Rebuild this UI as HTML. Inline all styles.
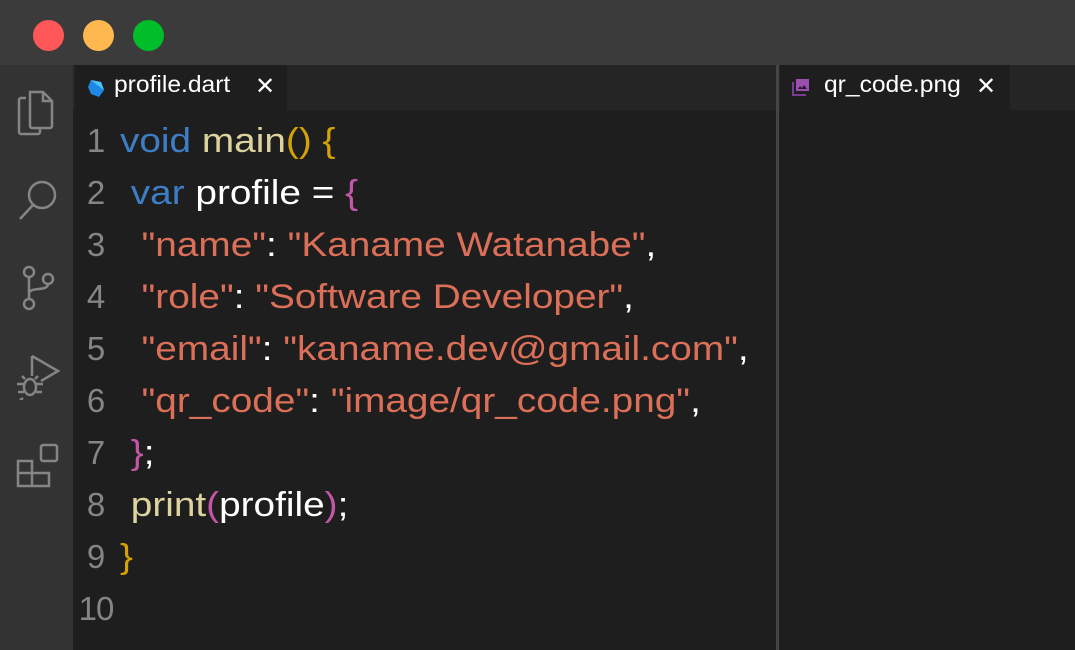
<!DOCTYPE html>
<html><head><style>
body{margin:0;width:1075px;height:650px;overflow:hidden;background:#1e1e1e;font-family:"Liberation Sans",Arial,sans-serif;position:relative}
.title{position:absolute;left:0;top:0;width:1075px;height:65px;background:#3b3b3b}
.dot{position:absolute;top:20px;width:31px;height:31px;border-radius:50%}
.act{position:absolute;left:0;top:65px;width:73px;height:585px;background:#333333}
.tabbar{position:absolute;left:73px;top:65px;width:1002px;height:45px;background:#252526}
.tab{position:absolute;top:65px;height:45px;background:#1e1e1e;color:#fff;font-size:23px}
.tab span{position:absolute;top:6px;display:inline-block;transform:scaleX(1.07);transform-origin:left}
.x{position:absolute;top:7px;font-size:24px;color:#fff}
.div{position:absolute;left:776px;top:65px;width:3px;height:585px;background:#454545}
.ln{position:absolute;left:78px;width:36px;text-align:center;color:#858585;font-size:33px;line-height:52px}
.code{position:absolute;left:120px;font-size:34px;line-height:52px;white-space:pre;color:#fff;transform:scaleX(1.14);transform-origin:left}
.b{color:#3c7dc4}.f{color:#dcd39e}.p{color:#d4a106}.m{color:#c257a8}.s{color:#dc6f58}
svg{position:absolute}
</style></head><body>
<div class="title"></div>
<div class="dot" style="left:33px;background:#ff5757"></div>
<div class="dot" style="left:83px;background:#ffb84f"></div>
<div class="dot" style="left:133px;background:#00bd2a"></div>
<div class="act"></div>
<div class="tabbar"></div>
<div class="tab" style="left:75px;width:212px">
<svg style="left:12px;top:13px" width="18" height="20" viewBox="0 0 18 20"><path d="M4 2 L14 4 L17 12 L12 19 L4 16 L1 9Z" fill="#1e88e5"/><path d="M4 2 L14 4 L17 12 L9 6Z" fill="#4fc3f7"/></svg>
<span style="left:39px">profile.dart</span><div class="x" style="left:180px">✕</div></div>
<div class="tab" style="left:780px;width:230px">
<svg style="left:12px;top:13px" width="18" height="18" viewBox="0 0 18 18"><rect x="4" y="1" width="13" height="12" fill="#9c4fb0"/><path d="M1 4 V17 H14" fill="none" stroke="#7b3b92" stroke-width="2"/><path d="M6 11 l2-3 2 2 2-3 3 4z" fill="#2a1a30"/></svg>
<span style="left:44px">qr_code.png</span><div class="x" style="left:196px">✕</div></div>
<div class="div"></div>
<svg style="left:15px;top:88px" width="44" height="48" viewBox="0 0 44 48" fill="none" stroke="#858585" stroke-width="2.5"><path d="M11 10 H6 a2 2 0 0 0-2 2 V44 a2 2 0 0 0 2 2 H23 a2 2 0 0 0 2-2 V40"/><path d="M15 4 H28 L37 13 V38 a2 2 0 0 1-2 2 H17 a2 2 0 0 1-2-2Z"/><path d="M28 4 V13 H37"/></svg>
<svg style="left:16px;top:178px" width="44" height="46" viewBox="0 0 44 46" fill="none" stroke="#858585" stroke-width="2.5"><circle cx="26" cy="17" r="13"/><path d="M17 27 L4 41"/></svg>
<svg style="left:18px;top:264px" width="40" height="48" viewBox="0 0 40 48" fill="none" stroke="#858585" stroke-width="2.5"><circle cx="11" cy="8" r="5"/><circle cx="11" cy="40" r="5"/><circle cx="30" cy="15" r="5"/><path d="M11 13 V35 M11 30 C11 22 30 28 30 20"/></svg>
<svg style="left:15px;top:352px" width="46" height="48" viewBox="0 0 46 48" fill="none" stroke="#858585" stroke-width="2.5"><path d="M17 4 V24 M17 4 L43 19 L26 29"/><ellipse cx="15" cy="35" rx="6" ry="8"/><path d="M9 32 H2 M9 40 H3 M21 32 H28 M21 40 H27 M10 27 l-3-3 M20 27 l3-3 M8 46 l-3 2"/></svg>
<svg style="left:15px;top:442px" width="46" height="46" viewBox="0 0 46 46" fill="none" stroke="#858585" stroke-width="2.5"><rect x="26" y="3" width="16" height="16" rx="2"/><path d="M3 19 H17 V44 H3Z M3 31 H34 V44 H17 M17 31 V19"/></svg>
<div class="ln" style="top:115px">1<br>2<br>3<br>4<br>5<br>6<br>7<br>8<br>9<br><span style="letter-spacing:-1px">10</span></div>
<div class="code" style="top:115px"><span class="b">void</span> <span class="f">main</span><span class="p">()</span> <span class="p">{</span>
 <span class="b">var</span> profile = <span class="m">{</span>
  <span class="s">"name"</span>: <span class="s">"Kaname Watanabe"</span>,
  <span class="s">"role"</span>: <span class="s">"Software Developer"</span>,
  <span class="s">"email"</span>: <span class="s">"kaname.dev@gmail.com"</span>,
  <span class="s">"qr_code"</span>: <span class="s">"image/qr_code.png"</span>,
 <span class="m">}</span>;
 <span class="f">print</span><span class="m">(</span>profile<span class="m">)</span>;
<span class="p">}</span>
</div>
</body></html>
